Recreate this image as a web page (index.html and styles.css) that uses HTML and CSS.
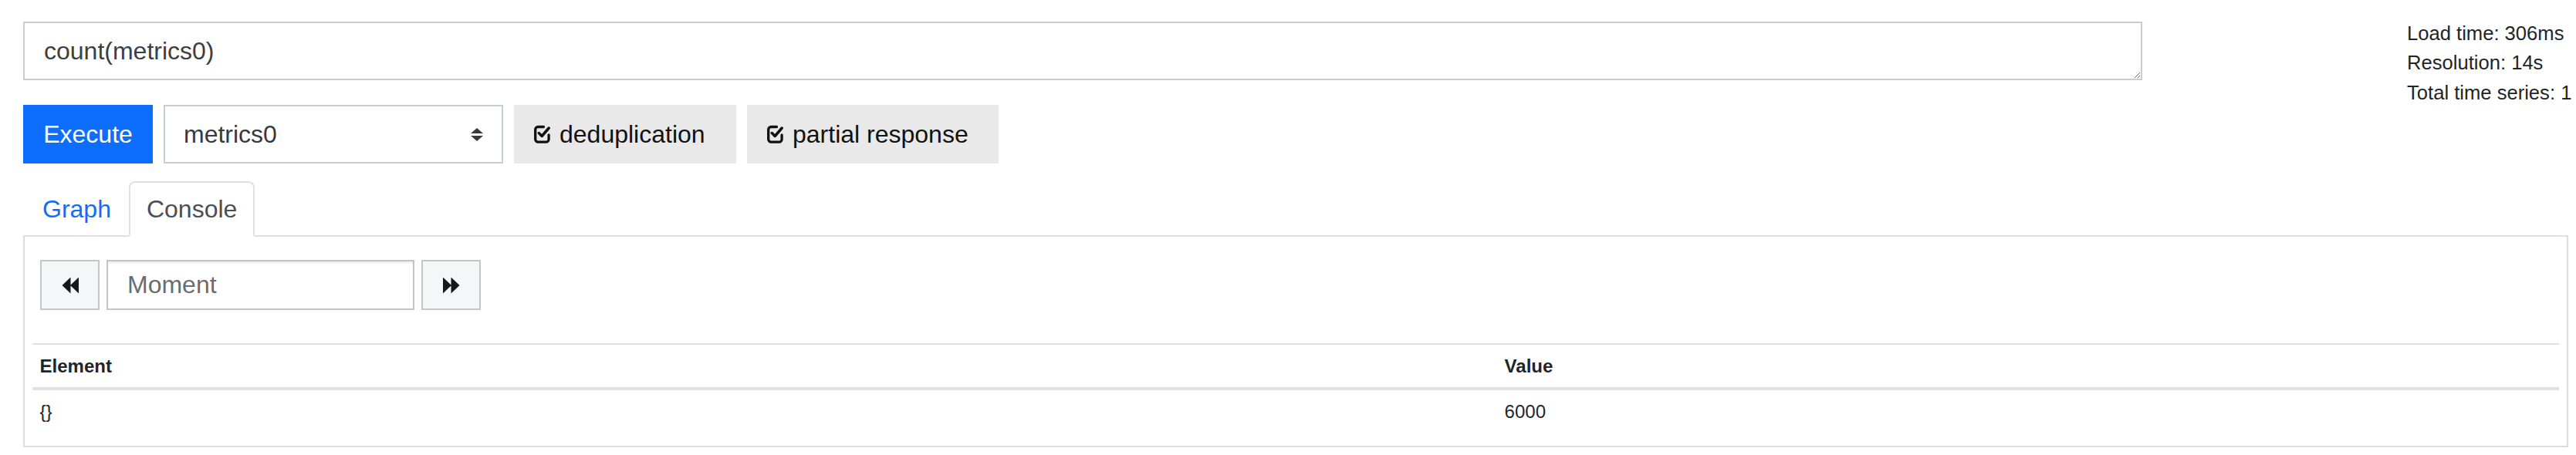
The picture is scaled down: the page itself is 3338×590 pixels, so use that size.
FILE: index.html
```html
<!DOCTYPE html>
<html lang="en">
<head>
<meta charset="utf-8">
<title>Thanos Query</title>
<link rel="stylesheet" href="styles.css">
</head>
<body>
<div class="page">
  <div class="top-row">
    <div class="query-col">
      <textarea class="expr" rows="1">count(metrics0)</textarea>
    </div>
    <div class="stats">
      <div>Load time: 306ms</div>
      <div>Resolution: 14s</div>
      <div>Total time series: 1</div>
    </div>
  </div>

  <div class="controls">
    <button class="btn-exec">Execute</button>
    <div class="select">
      <span class="select-text">metrics0</span>
      <span class="select-arrows"><span class="arr-up"></span><span class="arr-down"></span></span>
    </div>
    <button class="btn-check btn-dedup">
      <svg class="check-icon" viewBox="0 0 21 28" aria-hidden="true"><path d="M12.5 6.5H5.2A3.5 3.5 0 0 0 1.7 10v12.6a3.5 3.5 0 0 0 3.5 3.5h10.4a3.5 3.5 0 0 0 3.5-3.5V17" fill="none" stroke="#111" stroke-width="3.3" stroke-linecap="round"/><path d="M6.3 14.6l3.9 3.9L19.2 8" fill="none" stroke="#111" stroke-width="3.5" stroke-linecap="round" stroke-linejoin="round"/></svg>
      <span>deduplication</span>
    </button>
    <button class="btn-check btn-partial">
      <svg class="check-icon" viewBox="0 0 21 28" aria-hidden="true"><path d="M12.5 6.5H5.2A3.5 3.5 0 0 0 1.7 10v12.6a3.5 3.5 0 0 0 3.5 3.5h10.4a3.5 3.5 0 0 0 3.5-3.5V17" fill="none" stroke="#111" stroke-width="3.3" stroke-linecap="round"/><path d="M6.3 14.6l3.9 3.9L19.2 8" fill="none" stroke="#111" stroke-width="3.5" stroke-linecap="round" stroke-linejoin="round"/></svg>
      <span>partial response</span>
    </button>
  </div>

  <div class="tabs">
    <a class="tab tab-link">Graph</a>
    <a class="tab tab-active">Console</a>
  </div>

  <div class="panel">
    <div class="moment-row">
      <button class="nav-btn" aria-label="previous">
        <svg viewBox="0 0 22 22" class="nav-icon"><path d="M11.5 0.5 L0.5 11 L11.5 21.5 Z M22 0.5 L11 11 L22 21.5 Z" fill="#16191c"/></svg>
      </button>
      <input class="moment" type="text" placeholder="Moment">
      <button class="nav-btn" aria-label="next">
        <svg viewBox="0 0 22 22" class="nav-icon"><path d="M0 0.5 L11 11 L0 21.5 Z M10.5 0.5 L21.5 11 L10.5 21.5 Z" fill="#16191c"/></svg>
      </button>
    </div>

    <table class="data">
      <thead>
        <tr><th class="col-el">Element</th><th>Value</th></tr>
      </thead>
      <tbody>
        <tr><td class="col-el">{}</td><td>6000</td></tr>
      </tbody>
    </table>
  </div>
</div>
</body>
</html>
```

FILE: styles.css
```css
* { box-sizing: border-box; }

html, body {
  margin: 0;
  padding: 0;
  background: #fff;
}

body {
  font-family: "Liberation Sans", Arial, Helvetica, sans-serif;
  color: #212529;
  font-size: 32px;
  line-height: 1.5;
}

.page {
  padding: 28px 10px 0 30px;
  width: 3338px;
}

.top-row {
  display: flex;
  align-items: flex-start;
  height: 76px;
}

.query-col {
  flex: 0 0 2746px;
}

.expr {
  display: block;
  width: 100%;
  height: 76px;
  margin: 0;
  padding: 12px 25px;
  border: 2px solid #c8ccd4;
  border-radius: 0;
  font-family: "Liberation Sans", Arial, sans-serif;
  font-size: 32px;
  line-height: 48px;
  color: #3b4046;
  resize: vertical;
  outline: none;
}

.stats {
  margin-left: 343px;
  margin-top: -4px;
  font-size: 25.6px;
  line-height: 38.4px;
  white-space: nowrap;
  color: #212529;
}

.controls {
  display: flex;
  gap: 14px;
  margin-top: 32px;
  height: 76px;
}

.btn-exec {
  width: 168px;
  height: 76px;
  margin: 0;
  border: none;
  background: #0d6efd;
  color: #fff;
  font-family: inherit;
  font-size: 32px;
  line-height: 48px;
  padding: 0;
}

.select {
  width: 440px;
  height: 76px;
  border: 2px solid #c8ccd4;
  display: flex;
  align-items: center;
  padding: 0 24px 0 24px;
  color: #343a40;
}

.select-text {
  flex: 1;
}

.select-arrows {
  display: flex;
  flex-direction: column;
  gap: 3px;
}

.arr-up, .arr-down {
  width: 0;
  height: 0;
  border-left: 8.5px solid transparent;
  border-right: 8.5px solid transparent;
}

.arr-up { border-bottom: 7px solid #343a40; }
.arr-down { border-top: 7px solid #343a40; }

.btn-check {
  height: 76px;
  margin: 0;
  border: none;
  background: #e9e9e9;
  color: #111;
  font-family: inherit;
  font-size: 32px;
  line-height: 48px;
  padding: 0 0 0 26px;
  display: flex;
  align-items: center;
  gap: 12px;
}

.btn-dedup { width: 288px; }
.btn-partial { width: 326px; }

.check-icon {
  width: 21px;
  height: 28px;
  display: block;
  margin-top: -5px;
}

.tabs {
  display: flex;
  margin-top: 23px;
  position: relative;
  z-index: 1;
}

.tab {
  display: block;
  padding: 10px 21px;
  border: 2px solid transparent;
  border-radius: 8px 8px 0 0;
  line-height: 48px;
  font-size: 32px;
  height: 72px;
  margin-bottom: -2px;
}

.tab-link {
  color: #0d6efd;
  margin-left: 2px;
}

.tab-active {
  color: #495057;
  background: #fff;
  border-color: #dee2e6 #dee2e6 #fff;
}

.panel {
  border: 2px solid #dcdcdc;
  border-top-color: #dee2e6;
  padding: 0 10px 17px;
}

.moment-row {
  display: flex;
  gap: 9px;
  margin: 30px 10px 0;
  height: 65px;
}

.nav-btn {
  width: 77px;
  height: 65px;
  margin: 0;
  padding: 0;
  background: #f5f6f8;
  border: 2px solid #c6c6c6;
  display: flex;
  align-items: center;
  justify-content: center;
}

.nav-icon {
  width: 22px;
  height: 22px;
  display: block;
}

.moment {
  width: 399px;
  height: 65px;
  margin: 0;
  border: 2px solid #c4c4c4;
  box-shadow: inset 0 2px 2px rgba(0,0,0,0.08);
  padding: 0 25px;
  font-family: inherit;
  font-size: 32px;
  color: #495057;
  outline: none;
}

.moment::placeholder {
  color: #6c6c6c;
}

.data {
  width: 100%;
  margin-top: 43px;
  border-collapse: collapse;
  font-size: 24px;
  line-height: 36px;
  color: #212529;
}

.data th, .data td {
  text-align: left;
  padding: 9.6px 9.6px;
  border-top: 2px solid #dee2e6;
  vertical-align: top;
}

.data th {
  font-weight: bold;
  border-bottom: 4px solid #dee2e6;
}

.data .col-el {
  width: 1898px;
}

.data tbody td {
  border-top: none;
}
```
